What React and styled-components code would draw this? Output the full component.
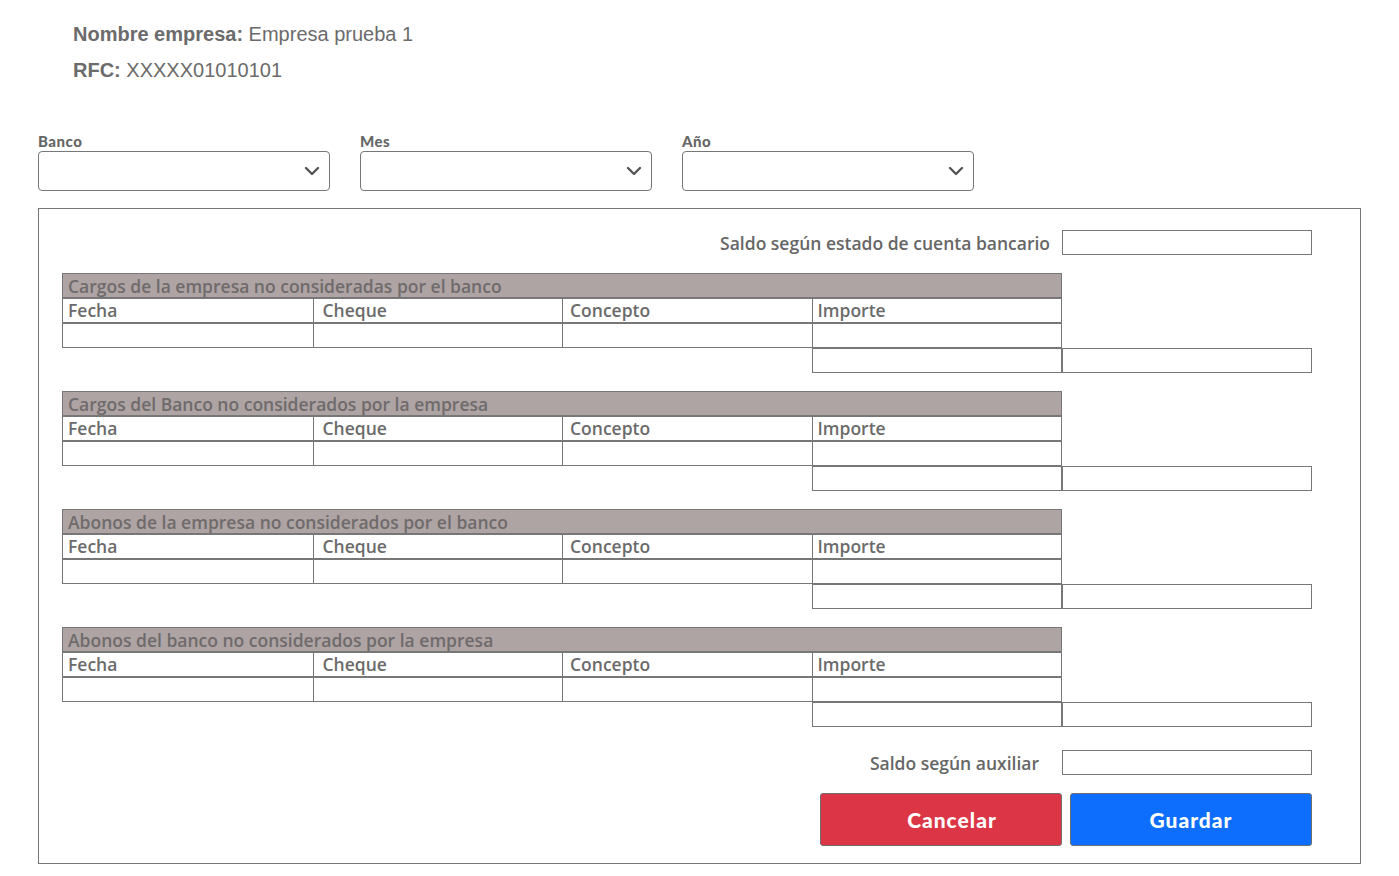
import React from "react";
import styled, { createGlobalStyle } from "styled-components";

const GlobalStyle = createGlobalStyle`
  body {
    margin: 0;
    background: #ffffff;
    font-family: "Open Sans", "Liberation Sans", sans-serif;
  }
`;

const Page = styled.div`
  padding: 16px 38px 12px 38px;
  color: #6b6b6b;
`;

const Company = styled.div`
  padding-left: 35px;
  font-family: "Liberation Sans", Arial, sans-serif;
  font-size: 20px;
  line-height: 36px;
  color: #6b6b6b;

  b {
    font-weight: 700;
  }
`;

const Filters = styled.div`
  display: flex;
  gap: 30px;
  margin-top: 43px;
`;

const Field = styled.div`
  display: flex;
  flex-direction: column;
  width: 292px;
`;

const FieldLabel = styled.label`
  font-family: Lato, "Open Sans", sans-serif;
  font-weight: 900;
  font-size: 15px;
  line-height: 20px;
  color: #666;
  letter-spacing: 0.5px;
`;

const SelectBox = styled.div`
  height: 40px;
  box-sizing: border-box;
  border: 1px solid #777;
  border-radius: 4px;
  display: flex;
  align-items: center;
  justify-content: flex-end;
  padding-right: 9px;
`;

const Panel = styled.div`
  margin-top: 17px;
  border: 1px solid #777;
  padding: 21px 48px 17px 23px;
  display: flex;
  flex-direction: column;
  gap: 18px;
`;

const SaldoRow = styled.div`
  display: flex;
  justify-content: flex-end;
  align-items: center;
  gap: ${(p) => p.$gap}px;
  margin-top: ${(p) => p.$top || 0}px;
`;

const SaldoLabel = styled.span`
  font-size: 17.5px;
  font-weight: 600;
  color: #666;
`;

const Input = styled.div`
  width: 250px;
  height: 25px;
  box-sizing: border-box;
  border: 1px solid #777;
`;

const Table = styled.div`
  display: flex;
  flex-direction: column;
`;

const Row = styled.div`
  width: 1000px;
  height: 25px;
  box-sizing: border-box;
  border: 1px solid #777;
  display: flex;
  background: ${(p) => (p.$title ? "#aea4a4" : "#fff")};
`;

const Title = styled.span`
  padding-left: 5px;
  font-size: 17.5px;
  font-weight: 600;
  line-height: 25px;
  margin-top: 0;
  color: #6f6b6b;
  white-space: nowrap;
`;

const Cell = styled.div`
  width: 250px;
  box-sizing: border-box;
  border-left: ${(p) => (p.$first ? "none" : "1px solid #777")};
  padding-left: ${(p) => p.$pad || 5}px;
  font-size: 17.5px;
  font-weight: 600;
  line-height: 23px;
  color: #6b6b6b;
  white-space: nowrap;
  overflow: hidden;
`;

const SumRow = styled.div`
  display: flex;
  padding-left: 750px;
`;

const SumCell = styled.div`
  width: 250px;
  height: 25px;
  box-sizing: border-box;
  border: 1px solid #777;
`;

const Buttons = styled.div`
  display: flex;
  justify-content: flex-end;
  gap: 8px;
`;

const Button = styled.button`
  width: 242px;
  height: 53px;
  border: 1px solid #6f6f6f;
  border-radius: 3px;
  padding: 0 0 0 ${(p) => p.$shift || 0}px;
  background: ${(p) => p.$bg};
  color: #fff;
  font-family: Lato, "Open Sans", sans-serif;
  font-weight: 900;
  font-size: 21px;
  letter-spacing: 1px;
  cursor: pointer;
`;

const Chevron = () => (
  <svg width="16" height="10" viewBox="0 0 16 10">
    <path d="M2 2l6 6 6-6" fill="none" stroke="#555" strokeWidth="2.4" strokeLinecap="round" strokeLinejoin="round" />
  </svg>
);

const sections = [
  "Cargos de la empresa no consideradas por el banco",
  "Cargos del Banco no considerados por la empresa",
  "Abonos de la empresa no considerados por el banco",
  "Abonos del banco no considerados por la empresa",
];

const columns = [
  { name: "Fecha", pad: 5 },
  { name: "Cheque", pad: 9 },
  { name: "Concepto", pad: 7 },
  { name: "Importe", pad: 5 },
];

const Section = ({ title }) => (
  <Table>
    <Row $title>
      <Title>{title}</Title>
    </Row>
    <Row>
      {columns.map((c, i) => (
        <Cell key={c.name} $first={i === 0} $pad={c.pad}>
          {c.name}
        </Cell>
      ))}
    </Row>
    <Row>
      {columns.map((c, i) => (
        <Cell key={c.name} $first={i === 0} />
      ))}
    </Row>
    <SumRow>
      <SumCell />
      <SumCell />
    </SumRow>
  </Table>
);

export default function App() {
  return (
    <>
      <GlobalStyle />
      <Page>
        <Company>
          <div>
            <b>Nombre empresa:</b> Empresa prueba 1
          </div>
          <div>
            <b>RFC:</b> XXXXX01010101
          </div>
        </Company>

        <Filters>
          {["Banco", "Mes", "Año"].map((l) => (
            <Field key={l}>
              <FieldLabel>{l}</FieldLabel>
              <SelectBox>
                <Chevron />
              </SelectBox>
            </Field>
          ))}
        </Filters>

        <Panel>
          <SaldoRow $gap={12}>
            <SaldoLabel>Saldo según estado de cuenta bancario</SaldoLabel>
            <Input />
          </SaldoRow>

          {sections.map((s) => (
            <Section key={s} title={s} />
          ))}

          <SaldoRow $gap={23} $top={5}>
            <SaldoLabel>Saldo según auxiliar</SaldoLabel>
            <Input />
          </SaldoRow>

          <Buttons>
            <Button $bg="#dc3545" $shift={22}>Cancelar</Button>
            <Button $bg="#0d6efd">Guardar</Button>
          </Buttons>
        </Panel>
      </Page>
    </>
  );
}
